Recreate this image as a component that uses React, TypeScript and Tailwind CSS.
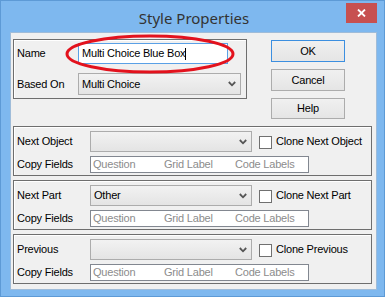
import React from "react";

const font = { fontFamily: '"Liberation Sans", Arial, sans-serif' };

function Chevron() {
  return (
    <svg width="8" height="6" viewBox="0 0 8 6" className="block">
      <path d="M0.8 1 L4 4.3 L7.2 1" fill="none" stroke="#555" strokeWidth="1.8" />
    </svg>
  );
}

function Combo({ w, h, text }: { w: string; h: string; text?: string }) {
  return (
    <div
      className={`${w} ${h} border border-[#acacac] bg-gradient-to-b from-[#f2f2f2] to-[#e4e4e4] flex items-center justify-between pl-[3px] pr-[4px]`}
    >
      <span className="text-[11px] text-black leading-none">{text ?? ""}</span>
      <Chevron />
    </div>
  );
}

function CopyFields() {
  return (
    <div className="w-[219px] h-[17px] border border-[#828790] bg-white flex items-center pl-[2px] text-[11px] leading-none text-[#8c8c8c]">
      <span className="w-[71px]">Question</span>
      <span className="w-[71px]">Grid Label</span>
      <span>Code Labels</span>
    </div>
  );
}

function Btn({ label, def, h }: { label: string; def?: boolean; h: string }) {
  return (
    <div
      className={`w-[74px] ${h} border ${def ? "border-[#3c8fe0]" : "border-[#acacac]"} bg-gradient-to-b from-[#f0f0f0] to-[#e5e5e5] flex items-center justify-center text-[11px] leading-none text-black`}
    >
      {label}
    </div>
  );
}

function Group({
  label,
  combo,
  clone,
}: {
  label: string;
  combo?: string;
  clone: string;
}) {
  return (
    <div className="w-[359px] h-[50px] border border-[#6e6e6e] shadow-[inset_1px_1px_0_#ffffff] flex flex-col pt-[4px] pl-[3px]">
      <div className="flex items-center h-[21px]">
        <span className="w-[73px] text-[11px] leading-none">{label}</span>
        <Combo w="w-[162px]" h="h-[21px]" text={combo} />
        <div className="ml-[7px] w-[13px] h-[13px] border border-[#707070] bg-white mt-[1px]" />
        <span className="ml-[4px] text-[11px] leading-none">{clone}</span>
      </div>
      <div className="flex items-center h-[17px] mt-[4px]">
        <span className="w-[73px] text-[11px] leading-none">Copy Fields</span>
        <CopyFields />
      </div>
    </div>
  );
}

export default function App() {
  return (
    <div className="w-[387px] h-[299px] bg-white tracking-[-0.2px]" style={font}>
      <div className="relative w-[385px] h-[297px] border border-[#5d9ad6] bg-[#7eb8ef] flex flex-col">
        {/* title bar */}
        <div className="relative h-[31px] flex items-center justify-center">
          <span
            className="text-[15px] text-[#333333] leading-none mt-[3px] ml-[3px] tracking-normal"
            style={{ fontFamily: '"Noto Sans", "Open Sans", sans-serif' }}
          >
            Style Properties
          </span>
          <div className="absolute right-[7px] top-[2px] w-[31px] h-[20px] bg-[#c75050] flex items-center justify-center">
            <svg width="9" height="8" viewBox="0 0 9 8">
              <path d="M1 0.5 L8 7.5 M8 0.5 L1 7.5" stroke="#ffffff" strokeWidth="1.8" />
            </svg>
          </div>
        </div>
        {/* client */}
        <div className="ml-[9px] w-[367px] h-[258px] border border-[#9fbcd9] bg-[#f0f0f0] flex flex-col pl-[2px] pt-[6px] text-black">
          <div className="flex items-start">
            <div className="w-[234px] h-[60px] border border-[#6e6e6e] shadow-[inset_1px_1px_0_#ffffff] flex flex-col pl-[3px] pt-[3px]">
              <div className="flex items-center h-[21px]">
                <span className="w-[61px] text-[11px] leading-none">Name</span>
                <div className="w-[150px] h-[21px] border border-[#5aa0e6] bg-white flex items-center pl-[3px] text-[11px] leading-none">
                  Multi Choice Blue Box
                  <span className="inline-block w-px h-[12px] bg-black" />
                </div>
              </div>
              <div className="flex items-center h-[22px] mt-[9px]">
                <span className="w-[61px] text-[11px] leading-none">Based On</span>
                <Combo w="w-[163px]" h="h-[22px]" text="Multi Choice" />
              </div>
            </div>
            <div className="ml-[24px] mt-[1px] flex flex-col gap-[7px]">
              <Btn label="OK" def h="h-[22px]" />
              <Btn label="Cancel" h="h-[22px]" />
              <Btn label="Help" h="h-[21px]" />
            </div>
          </div>
          <div className="mt-[7px] flex flex-col gap-[4px]">
            <Group label="Next Object" clone="Clone Next Object" />
            <Group label="Next Part" combo="Other" clone="Clone Next Part" />
            <Group label="Previous" clone="Clone Previous" />
          </div>
        </div>
        {/* red annotation ellipse */}
        <svg
          className="absolute left-[64px] top-[33px]"
          width="170"
          height="40"
          viewBox="0 0 170 40"
        >
          <ellipse cx="85" cy="20" rx="83" ry="18" fill="none" stroke="#e3121d" strokeWidth="3" />
        </svg>
      </div>
    </div>
  );
}
